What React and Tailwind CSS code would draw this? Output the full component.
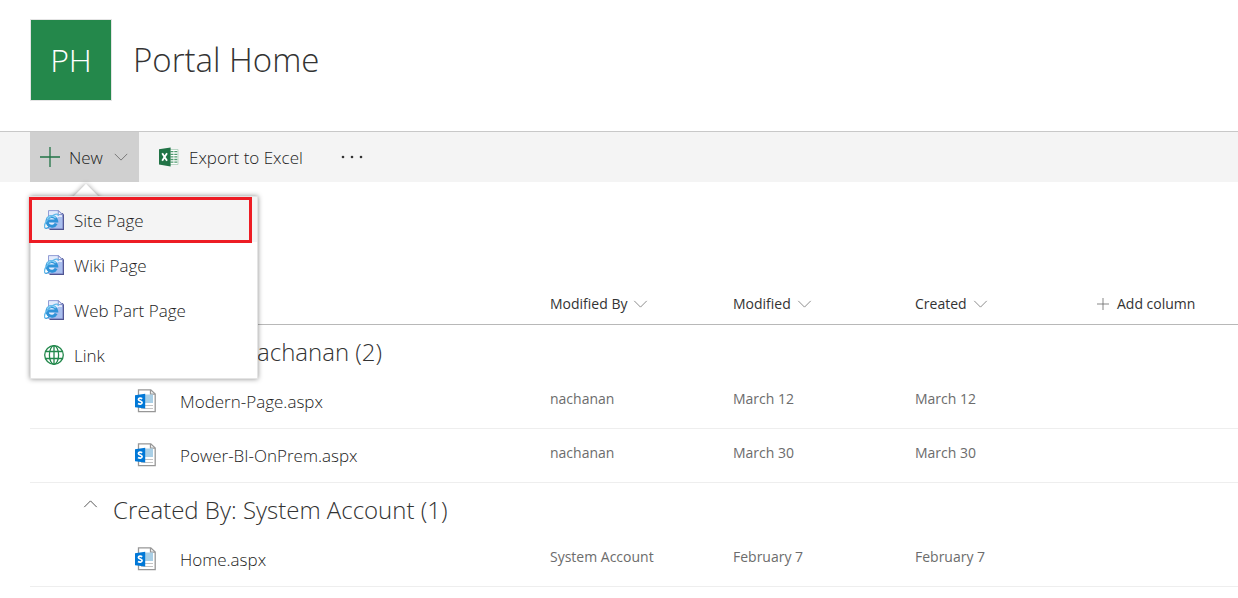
import React from "react";

function Chevron({ className, up }) {
  return (
    <svg viewBox="0 0 16 9" className={className} fill="none" stroke="currentColor" strokeWidth="1.1" aria-hidden="true">
      <path d={up ? "M1 8 L8 1 L15 8" : "M1 1 L8 8 L15 1"} />
    </svg>
  );
}

function Plus({ className }) {
  return (
    <svg viewBox="0 0 20 20" className={className} fill="none" stroke="currentColor" aria-hidden="true">
      <path d="M10 0 V20 M0 10 H20" strokeWidth="1.3" />
    </svg>
  );
}

function ExcelIcon() {
  return (
    <svg viewBox="0 0 20 20" className="h-5 w-5 shrink-0" aria-hidden="true">
      <path d="M10 2.5 H19 V17.5 H10 Z" fill="#fff" stroke="#a9cdb7" strokeWidth="0.8" />
      <path d="M11.5 4.7 h3 M15.3 4.7 h3 M11.5 7.3 h3 M15.3 7.3 h3 M11.5 9.9 h3 M15.3 9.9 h3 M11.5 12.5 h3 M15.3 12.5 h3 M11.5 15.1 h3 M15.3 15.1 h3" stroke="#4f9a6f" strokeWidth="1.3" />
      <path d="M0 2.2 L11.6 0.4 V19.4 L0 17.6 Z" fill="#217346" />
      <path d="M3.2 6.2 L8 13.8 M8 6.2 L3.2 13.8" stroke="#fff" strokeWidth="1.8" />
    </svg>
  );
}

function WebPageIcon() {
  return (
    <svg viewBox="0 0 20 20" className="h-5 w-5 shrink-0" aria-hidden="true">
      <path d="M5.5 3 H18.5 L20 4.5 V20 H5.5 Z" fill="#4f5490" />
      <path d="M4.5 0.6 H14.5 L18.6 4.4 V18.4 H4.5 Z" fill="#e3ebfc" stroke="#8793d0" strokeWidth="0.9" />
      <path d="M14 7 H18.1 V17.9 H7 Z" fill="#a9bfee" />
      <path d="M14.3 0.8 V4.6 H18.2 Z" fill="#fff" stroke="#6f7bc0" strokeWidth="0.8" />
      <path d="M12.2 13.6 A4.9 4.9 0 1 1 12.7 11 H4.4" fill="none" stroke="#2f93d8" strokeWidth="3" />
      <path d="M3.2 9.6 A4.6 4.6 0 0 1 11.6 8.2" fill="none" stroke="#8ad4f7" strokeWidth="1.4" />
      <path d="M1 18 C-1 15.2 3.4 8.3 9.2 5.2 C12.1 3.7 14.6 3.6 14.2 6" fill="none" stroke="#62b9ea" strokeWidth="1.3" />
      <path d="M1 18 C2.2 18.8 4 18 5.4 16.8" fill="none" stroke="#3a9bdb" strokeWidth="1.2" />
    </svg>
  );
}

function GlobeIcon() {
  return (
    <svg viewBox="0 0 20 20" className="h-5 w-5 shrink-0" fill="none" stroke="#23884c" strokeWidth="1.3" aria-hidden="true">
      <circle cx="10" cy="10" r="9.3" />
      <ellipse cx="10" cy="10" rx="4.6" ry="9.3" />
      <path d="M10 0.7 V19.3 M1.6 6.5 H18.4 M1.6 13.5 H18.4" />
    </svg>
  );
}

function PageIcon() {
  return (
    <svg viewBox="0 0 21 24" className="h-6 w-[21px] shrink-0" aria-hidden="true">
      <path d="M3.5 0.8 H15.8 L20.2 5 V22.6 H3.5 Z" fill="#fff" stroke="#979797" strokeWidth="1.3" />
      <path d="M15.5 1 V5.2 H20" fill="none" stroke="#979797" strokeWidth="1.3" />
      <path d="M10 5.5 H18 V14 H10 Z" fill="#a9cfe6" />
      <path d="M10 16.5 H18 M6 19.5 H18" stroke="#c4c4c4" />
      <path d="M0 6.2 L10.2 4.8 V19.6 L0 18.2 Z" fill="#0078d7" />
      <path d="M7.2 9.7 C5.8 8.8 3.4 8.9 3.4 10.5 C3.4 12.3 7.1 11.8 7.1 13.6 C7.1 15.3 4.6 15.5 3 14.5" fill="none" stroke="#fff" strokeWidth="1.7" />
    </svg>
  );
}

const menuItems = [
  { label: "Site Page", icon: WebPageIcon, active: true },
  { label: "Wiki Page", icon: WebPageIcon },
  { label: "Web Part Page", icon: WebPageIcon },
  { label: "Link", icon: GlobeIcon },
];

const groups = [
  {
    title: "Created By: nachanan (2)",
    rows: [
      { name: "Modern-Page.aspx", by: "nachanan", modified: "March 12", created: "March 12" },
      { name: "Power-BI-OnPrem.aspx", by: "nachanan", modified: "March 30", created: "March 30" },
    ],
  },
  {
    title: "Created By: System Account (1)",
    rows: [{ name: "Home.aspx", by: "System Account", modified: "February 7", created: "February 7" }],
  },
];

function NewMenu() {
  return (
    <div className="absolute top-full left-0 z-10 mt-[14px] w-[228px]">
      <div className="absolute -top-2 left-[46px] h-5 w-5 rotate-45 bg-white shadow-[0_0_5px_rgba(0,0,0,0.4)]" />
      <ul role="menu" className="relative border border-[#e4e4e4] bg-white pb-px shadow-[0_0_5px_rgba(0,0,0,0.45)]">
        {menuItems.map(({ label, icon: Icon, active }) => (
          <li key={label} role="none" className={active ? "relative bg-[#f4f4f4]" : ""}>
            <button type="button" role="menuitem" className="flex h-[45px] w-full items-center gap-2.5 px-[13px] text-left text-[17px]">
              <Icon />
              <span className="pt-0.5">{label}</span>
            </button>
            {active && <div className="pointer-events-none absolute top-0 right-[5px] -bottom-px -left-0.5 border-3 border-[#ed1c24]" />}
          </li>
        ))}
      </ul>
    </div>
  );
}

function ColumnHeader({ children }) {
  return (
    <th className="p-0 font-normal">
      <button type="button" className="flex items-center gap-1.5">
        {children}
        <Chevron className="h-2 w-[15px] text-[#8a8a8a]" />
      </button>
    </th>
  );
}

export default function App() {
  return (
    <div className="min-h-screen bg-white font-['Open_Sans','Noto_Sans',sans-serif] font-[350] text-[#1c1c1c]">
      <header className="flex items-center gap-[21px] px-[30px] pt-[19px] pb-[30px]">
        <div className="flex h-[82px] w-[82px] items-center justify-center border border-[#e4e4e4] bg-[#24884b] text-[32px] font-light text-white">PH</div>
        <h1 className="text-[33px] font-light text-[#333]">Portal Home</h1>
      </header>

      <nav className="flex h-[51px] border-t border-[#c8c8c8] bg-[#f4f4f4] px-[30px] text-[17px]">
        <div className="relative">
          <button type="button" aria-haspopup="menu" aria-expanded="true" className="flex h-full w-[109px] items-center bg-[#d0d0d0] pl-2.5">
            <Plus className="h-5 w-5 text-[#217346]" />
            <span className="ml-[9px] pt-0.5">New</span>
            <Chevron className="ml-2.5 h-2 w-4 text-[#777]" />
          </button>
          <NewMenu />
        </div>
        <button type="button" className="ml-5 flex items-center gap-2.5">
          <ExcelIcon />
          <span className="pt-0.5">Export to Excel</span>
        </button>
        <button type="button" aria-label="More" className="ml-[38px] flex items-center">
          <svg viewBox="0 0 22 4" className="h-1 w-[22px]" fill="#333" aria-hidden="true">
            <circle cx="2" cy="2" r="1.3" />
            <circle cx="11" cy="2" r="1.3" />
            <circle cx="20" cy="2" r="1.3" />
          </svg>
        </button>
      </nav>

      <main className="pt-[102px] pl-[30px]">
        <table className="w-full table-fixed border-collapse text-left">
          <colgroup>
            <col className="w-[520px]" />
            <col className="w-[183px]" />
            <col className="w-[182px]" />
            <col className="w-[182px]" />
            <col />
          </colgroup>
          <thead>
            <tr className="h-10 border-b border-[#b8b8b8] text-sm text-[#333]">
              <th className="p-0" aria-label="Name" />
              <ColumnHeader>Modified By</ColumnHeader>
              <ColumnHeader>Modified</ColumnHeader>
              <ColumnHeader>Created</ColumnHeader>
              <th className="p-0 font-normal">
                <button type="button" className="flex items-center gap-2 whitespace-nowrap">
                  <Plus className="h-3 w-3 text-[#666]" />
                  Add column
                </button>
              </th>
            </tr>
          </thead>
          {groups.map((group) => (
            <tbody key={group.title}>
              <tr className="h-[50px]">
                <th colSpan={5} className="p-0 font-light text-[#333]">
                  <button type="button" className="flex items-center gap-[15px] pt-1.5 pl-[53px] text-2xl">
                    <Chevron up className="mb-3 h-2 w-[15px] text-[#555]" />
                    {group.title}
                  </button>
                </th>
              </tr>
              {group.rows.map((row) => (
                <tr key={row.name} className="h-[54px] border-b border-[#eee] text-sm text-[#6c6c6c]">
                  <td className="p-0">
                    <a href="#" className="flex items-center gap-6 pl-[105px] text-[17px] text-[#1c1c1c]">
                      <PageIcon />
                      <span className="pt-0.5">{row.name}</span>
                    </a>
                  </td>
                  <td className="p-0 pb-1 font-normal">{row.by}</td>
                  <td className="p-0 pb-1 font-normal">{row.modified}</td>
                  <td className="p-0 pb-1 font-normal">{row.created}</td>
                  <td className="p-0" />
                </tr>
              ))}
            </tbody>
          ))}
        </table>
      </main>
    </div>
  );
}
